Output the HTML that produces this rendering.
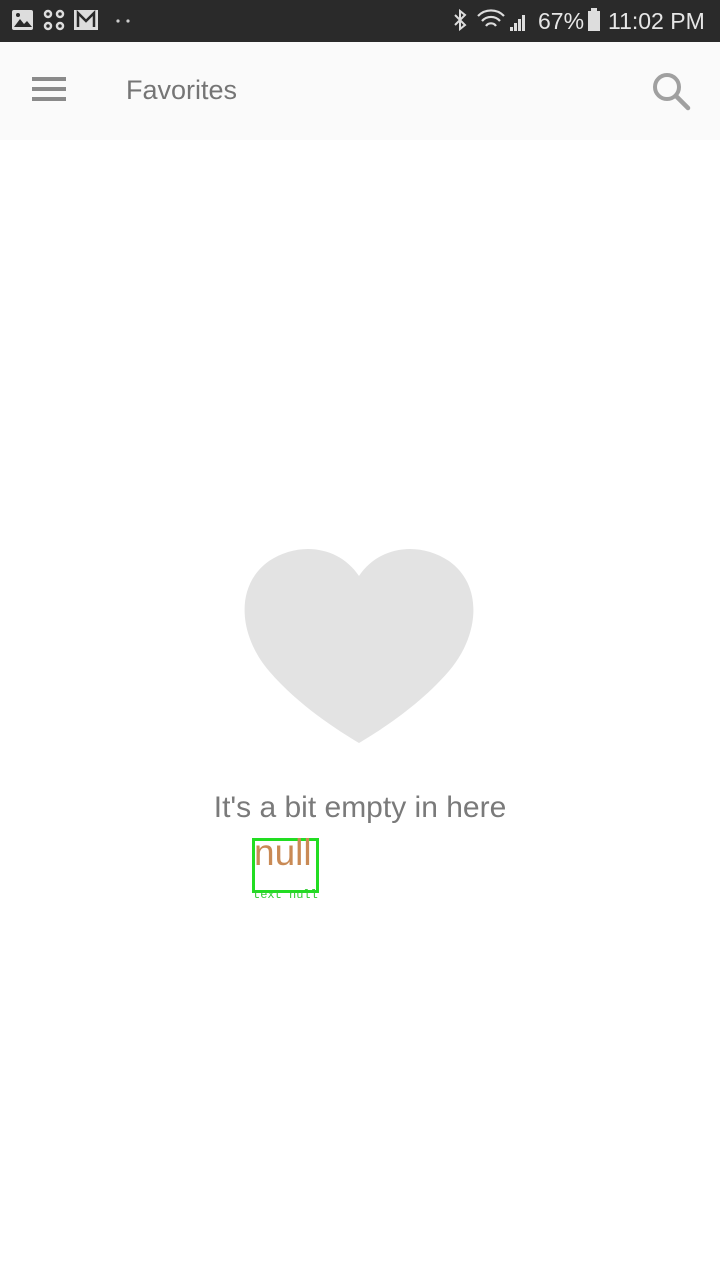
<!DOCTYPE html>
<html><head><meta charset="utf-8"><style>
body{margin:0;width:720px;height:1280px;background:#fff;position:relative;overflow:hidden;font-family:"Liberation Sans",sans-serif}
.sb{position:absolute;left:0;top:0;width:720px;height:42px;background:#2a2a2a;color:#e6e6e6}
.tb{position:absolute;left:0;top:42px;width:720px;height:98px;background:#fafafa}
</style></head><body>
<div class="sb">
 <svg width="720" height="42" style="position:absolute;left:0;top:0">
  <rect x="12" y="10" width="21" height="20" rx="2" fill="#ddd"/>
  <path d="M14 27l6-8 4 5 3-3 5 6z" fill="#2a2a2a"/><circle cx="18" cy="15" r="2" fill="#2a2a2a"/>
  <g fill="none" stroke="#ddd" stroke-width="2.5"><circle cx="48" cy="14" r="3"/><circle cx="60" cy="14" r="3"/><circle cx="48" cy="26" r="3"/><circle cx="60" cy="26" r="3"/></g>
  <rect x="74" y="10" width="24" height="20" fill="#ddd"/><path d="M78 27V13l8 8 8-8v14" fill="none" stroke="#2a2a2a" stroke-width="2.5"/>
  <circle cx="118" cy="21" r="1.6" fill="#ccc"/><circle cx="128" cy="21" r="1.6" fill="#ccc"/>
  <path d="M455 15l10 10-5 4V11l5 4-10 10" fill="none" stroke="#ddd" stroke-width="2"/>
  <path d="M478 16a18 18 0 0 1 26 0M482 21a12 12 0 0 1 18 0M486 26a6 6 0 0 1 10 0" fill="none" stroke="#ddd" stroke-width="2.2"/>
  <path d="M510 31h3v-4h-3zM514 31h3v-8h-3zM518 31h3v-12h-3zM522 31h3v-16h-3z" fill="#ddd"/>
  <rect x="588" y="11" width="12" height="20" fill="#ddd"/><rect x="591" y="8" width="6" height="3" fill="#ddd"/>
 </svg>
 <div style="position:absolute;left:538px;top:8px;font-size:23px">67%</div>
 <div style="position:absolute;left:608px;top:8px;font-size:23px">11:02 PM</div>
</div>
<div class="tb">
 <div style="position:absolute;left:32px;top:35px;width:34px;height:4px;background:#8a8a8a;box-shadow:0 10px 0 #8a8a8a,0 20px 0 #8a8a8a"></div>
 <div style="position:absolute;left:126px;top:33px;font-size:27px;color:#757575">Favorites</div>
 <svg width="44" height="44" style="position:absolute;left:648px;top:26px"><circle cx="19" cy="19" r="12" fill="none" stroke="#a0a0a0" stroke-width="4"/><path d="M28 28l12 12" stroke="#a0a0a0" stroke-width="4.5" stroke-linecap="round"/></svg>
</div>
<svg width="240" height="200" style="position:absolute;left:239px;top:546px" viewBox="0 0 240 200">
 <path d="M120 30C100 0 60-5 30 15C-5 40 0 90 30 125C60 160 100 185 120 197C140 185 180 160 210 125C240 90 245 40 210 15C180-5 140 0 120 30Z" fill="#e3e3e3"/>
</svg>
<div style="position:absolute;left:0;width:720px;top:791px;text-align:center;font-size:30px;color:#7a7a7a">It's a bit empty in here</div>
<div style="position:absolute;left:252px;top:838px;width:61px;height:49px;border:3px solid #22dd22"></div>
<div style="position:absolute;left:254px;top:832px;font-size:37px;color:#c98a55">null</div>
<div style="position:absolute;left:253px;top:888px;font-size:12px;color:#33cc33;font-family:'Liberation Mono',monospace;letter-spacing:0">text null</div>
</body></html>
